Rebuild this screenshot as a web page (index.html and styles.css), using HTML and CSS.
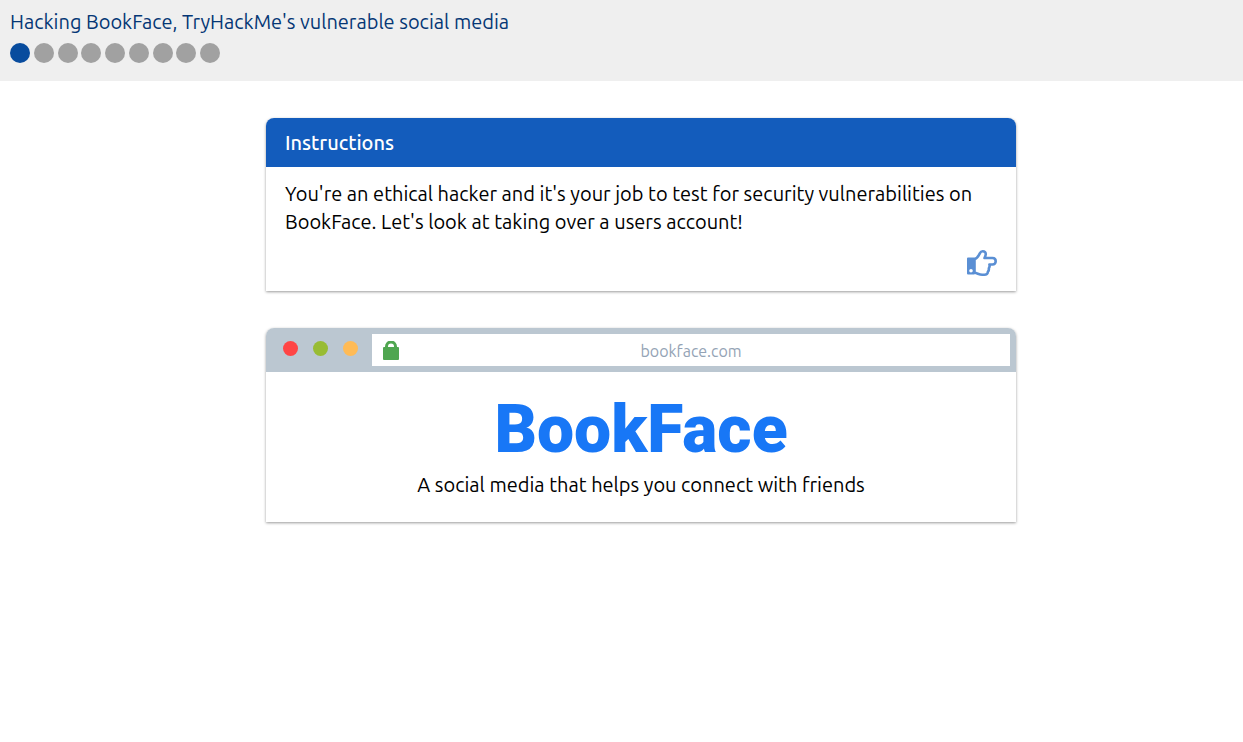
FILE: index.html
```html
<!DOCTYPE html>
<html lang="en">
<head>
<meta charset="utf-8">
<meta name="viewport" content="width=device-width, initial-scale=1">
<title>Hacking BookFace</title>
<link rel="stylesheet" href="styles.css">
</head>
<body>
<header class="topbar">
  <h1 class="topbar-title">Hacking BookFace, TryHackMe's vulnerable social media</h1>
  <ol class="steps" aria-label="Progress">
    <li class="step step-active"></li>
    <li class="step"></li>
    <li class="step"></li>
    <li class="step"></li>
    <li class="step"></li>
    <li class="step"></li>
    <li class="step"></li>
    <li class="step"></li>
    <li class="step"></li>
  </ol>
</header>
<main class="content">
  <section class="card">
    <h2 class="card-title">Instructions</h2>
    <div class="card-body">
      <p class="card-text">You're an ethical hacker and it's your job to test for security vulnerabilities on BookFace. Let's look at taking over a users account!</p>
      <button class="next" type="button" aria-label="Next">
        <svg class="next-icon" viewBox="0 0 30 26" aria-hidden="true">
          <path fill="#5a8fd4" fill-rule="evenodd" d="M1 7.500h6.500v17H1a1 1 0 0 1-1-1v-15a1 1 0 0 1 1-1zM4 19a1.800 1.800 0 1 0 0 3.600a1.800 1.800 0 0 0 0-3.600z"/>
          <path fill="none" stroke="#5a8fd4" stroke-width="2.600" stroke-linejoin="round" d="M7.500 9c3-.6 4-3 5.300-5.600C13.600 1.800 14.500 1.300 15.700 1.300c2 0 3.300 1.400 3 3.300c-.2 1.400-.7 2.400-1.200 3.400H25.500c2.100 0 3.200 1.500 3.200 3.300s-1.200 3.200-3.200 3.200H22.400c.5 1.500.2 2.700-.6 3.700c.3 1.500-.1 2.700-1 3.700c.1 2-1.300 2.800-3.400 2.800h-2.200c-3.200 0-5-1.700-7.700-1.900z"/>
        </svg>
      </button>
    </div>
  </section>
  <section class="card browser">
    <div class="browser-bar">
      <div class="lights">
        <span class="light light-red"></span>
        <span class="light light-green"></span>
        <span class="light light-amber"></span>
      </div>
      <div class="address">
        <svg class="lock" viewBox="0 0 16 20" aria-hidden="true">
          <rect x="0" y="6" width="16" height="13" rx="1" fill="#4fa650"/>
          <path d="M3.500 7V5.500a4.500 4.500 0 0 1 9 0V7" fill="none" stroke="#4fa650" stroke-width="3"/>
        </svg>
        <span class="address-text">bookface.com</span>
      </div>
    </div>
    <div class="page">
      <p class="logo">BookFace</p>
      <p class="tagline">A social media that helps you connect with friends</p>
    </div>
  </section>
</main>
</body>
</html>
```
FILE: styles.css
```css
* {
  box-sizing: border-box;
}

body {
  margin: 0;
  background: #fff;
  color: #000;
  font-family: Ubuntu, "Noto Sans", sans-serif;
  font-size: 20px;
  line-height: 28px;
}

h1,
h2,
p,
ol {
  margin: 0;
  padding: 0;
}

.topbar {
  padding: 8px 10px 18px;
  background: #efefef;
}

.topbar-title {
  color: #053775;
  font-size: 20px;
  font-weight: 400;
}

.steps {
  display: flex;
  justify-content: space-between;
  width: 210px;
  padding-top: 7px;
  list-style: none;
}

.step {
  width: 20px;
  height: 20px;
  border-radius: 50%;
  background: #a1a1a1;
}

.step-active {
  background: #084c9e;
}

.content {
  display: flex;
  flex-direction: column;
  align-items: center;
  gap: 37px;
  padding: 37px 0 37px 39px;
}

.card {
  width: 100%;
  max-width: 750px;
  border-radius: 8px 8px 0 0;
  background: #fff;
  box-shadow: 0 1px 3px rgba(0, 0, 0, 0.4);
}

.card-title {
  padding: 11px 19px 10px;
  border-radius: 8px 8px 0 0;
  background: #135cbc;
  color: #fff;
  font-size: 20px;
  font-weight: 500;
}

.card-body {
  display: flex;
  flex-direction: column;
  padding: 13px 19px 15px;
}

.next {
  align-self: flex-end;
  margin-top: 14px;
  padding: 0;
  border: 0;
  background: none;
  cursor: pointer;
}

.next-icon {
  display: block;
  width: 30px;
  height: 26px;
}

.browser-bar {
  display: flex;
  align-items: center;
  gap: 14px;
  padding: 6px 6px 6px 17px;
  border-radius: 8px 8px 0 0;
  background: #bbc7d1;
}

.lights {
  display: flex;
  gap: 15px;
  padding-bottom: 4px;
}

.light {
  width: 15px;
  height: 15px;
  border-radius: 50%;
}

.light-red {
  background: #ff4545;
}

.light-green {
  background: #98bc33;
}

.light-amber {
  background: #ffbb56;
}

.address {
  display: flex;
  flex: 1;
  align-items: center;
  height: 32px;
  padding: 2px 27px 0 11px;
  background: #fff;
}

.lock {
  width: 16px;
  height: 20px;
}

.address-text {
  flex: 1;
  color: #94a3b5;
  font-size: 16px;
  text-align: center;
}

.page {
  padding: 22px 19px 23px;
  text-align: center;
}

.logo {
  margin-bottom: 5px;
  color: #1877f6;
  font-family: Roboto, sans-serif;
  font-size: 66px;
  font-weight: 900;
  line-height: 72px;
}
```
